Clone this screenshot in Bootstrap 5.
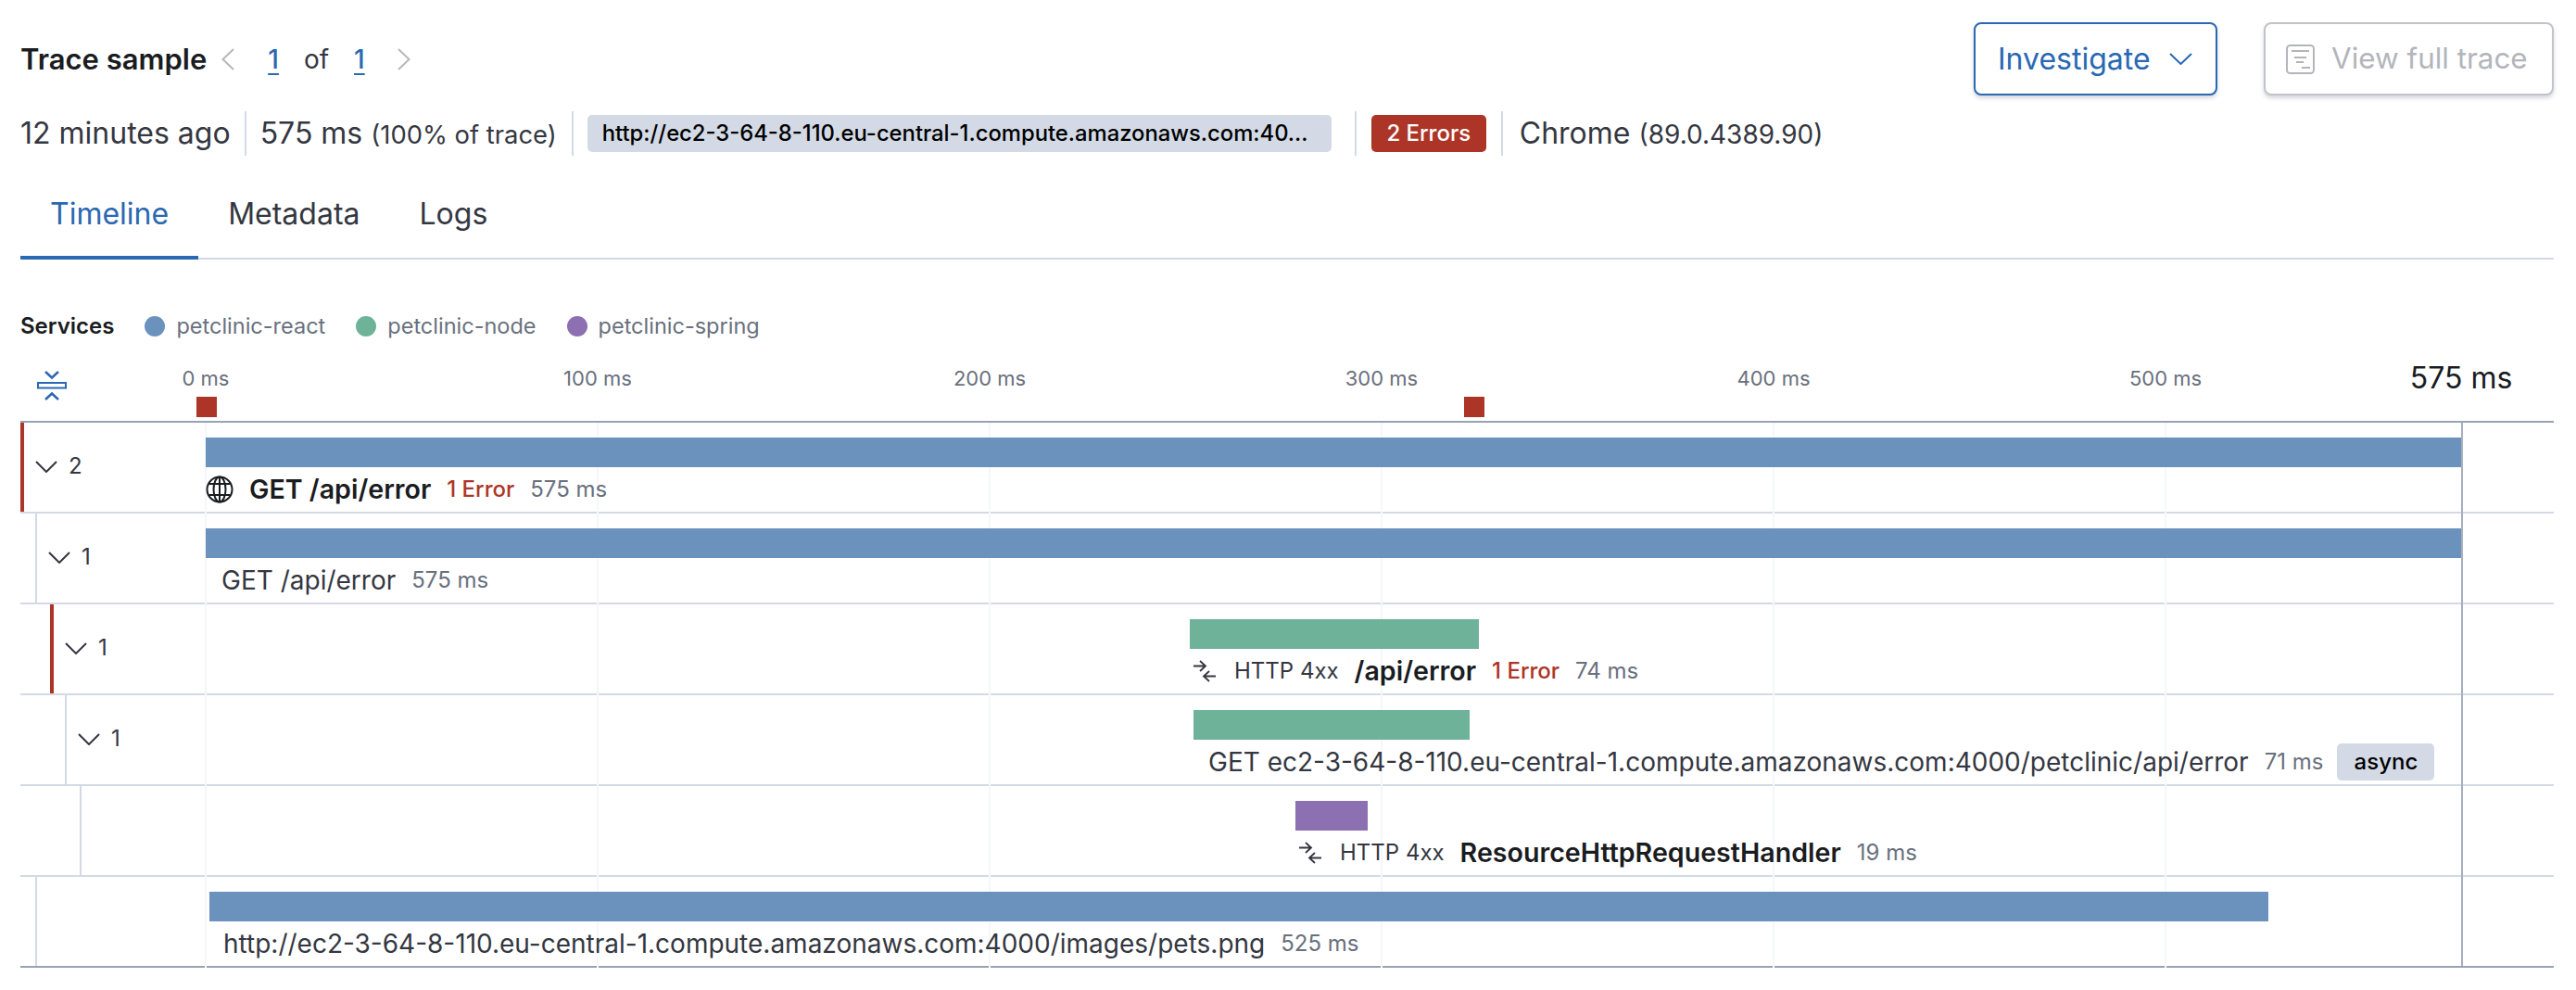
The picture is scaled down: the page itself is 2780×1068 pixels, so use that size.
<!DOCTYPE html>
<html lang="en">
<head>
<meta charset="utf-8">
<title>Trace sample</title>
<link href="https://cdn.jsdelivr.net/npm/bootstrap@5.3.0/dist/css/bootstrap.min.css" rel="stylesheet">
<style>
body{font-family:Inter,"Liberation Sans",sans-serif;color:#343741;background:#fff;overflow:hidden}
.wf-page{padding:24px 24px 0 22px}
.wf-head{height:79px}
.wf-title{font-size:31px;font-weight:600;color:#1a1c21;margin:0 16px 0 0}
.wf-pager{font-size:28px;color:#343741}
.wf-pager a{color:#2968b2;font-weight:500;text-decoration:underline;text-underline-offset:5px}
.wf-pg-first{margin-left:36px}
.wf-pg-of{margin:0 27px}
.wf-pg-next{margin-left:35px}
.wf-actions{column-gap:50px}
.wf-btn{height:79px;font-size:32px;font-weight:400;border-width:2.5px;border-radius:8px;display:flex;align-items:center;box-shadow:0 3px 4px rgba(60,80,120,.22)}
.wf-btn-primary{width:263px;padding:0 24px;gap:20px;color:#2968b2;border-color:#2968b2;background:#fff}
.wf-btn-primary:hover{color:#2968b2;background:#fff;border-color:#2968b2}
.wf-btn-off,.wf-btn-off:disabled{width:313px;font-size:31.400px;padding:0 22px;gap:18px;color:#b3b5bb;border-color:#c2c3c8;background:#fff;opacity:1;white-space:nowrap}
.wf-meta{margin-top:17px;height:48px;font-size:32px}
.wf-meta small{font-size:28px}
.wf-meta small.wf-tight{font-size:27.400px}
.wf-cell{display:flex;align-items:center;height:48px;padding-right:15px;margin-right:15px;border-right:2px solid #d3dae6}
.wf-cell-dur{padding-right:16px}
.wf-cell-url{padding-right:25px;margin-right:16px}
.wf-cell-err{padding-right:16px;margin-right:16px}
.wf-browser{margin-left:2px}
.wf-pill{height:40px;border-radius:5px;font-size:24px;font-weight:500;line-height:40px;padding:0 16px;display:block}
.wf-pill-url{width:803px;background:#d3dae6;color:#000;text-align:left;font-size:23.800px}
.wf-pill-err{background:#ad3527;color:#fff;width:124px;text-align:center;padding:0}
.wf-pill-tag{background:#d3dae6;color:#000;width:105px;padding:0;text-align:center;margin-left:-2px}
.wf-tabs{height:112px;border-bottom:2px solid #d3dae6;align-items:flex-end}
.wf-tabs .nav-link{font-size:32px;color:#343741;height:88px;padding:0 32px 7px;margin-bottom:-2px;display:flex;align-items:center;border-bottom:4px solid transparent}
.wf-tabs .nav-link.active{color:#2968b2;border-bottom-color:#2968b2}
.wf-legend{margin-top:56px;height:32px;font-size:23.500px;color:#69707d}
.wf-legend b{font-weight:600;font-size:24px;color:#1a1c21;margin-right:33px}
.wf-dot{width:22px;height:22px;border-radius:50%;margin-right:12px;flex:none}
.wf-legend-item{margin-right:33px}
.wf-blue{background:#6a92bd}.wf-green{background:#6eb29a}.wf-purple{background:#8c70b1}
.wf-ruler{margin-top:24px;height:32px;font-size:22px;color:#69707d}
.wf-ruler-icon{width:140px;padding-left:18px;margin-top:16px;flex:none}
.wf-tick{width:120px;text-align:center;flex:none;margin-right:303px;white-space:nowrap}
.wf-tick-end{font-size:32px;color:#1a1c21;margin-right:0}
.wf-marks{height:22px;margin-top:4px;margin-bottom:4px}
.wf-mark{width:22px;height:22px;background:#ad3527;flex:none}
.wf-list{position:relative;border-top:2px solid #98a2b3;border-bottom:2px solid #98a2b3}
.wf-list::before{content:"";position:absolute;top:0;bottom:-2px;left:199px;right:0;z-index:1;pointer-events:none;background:repeating-linear-gradient(to right,#f5f7fb 0,#f5f7fb 2px,transparent 2px,transparent 423px)}
.wf-list::after{content:"";position:absolute;top:0;bottom:0;left:2634px;width:2px;background:#a7aec0;z-index:1}
.wf-row{height:98px;border-bottom:2px solid #d3dae6}
.wf-row:last-child{height:96px;border-bottom:0}
.wf-tree{width:200px;flex:none;height:100%}
.wf-branch{height:100%;border-left:2px solid #d3dae6;display:flex;align-items:center;gap:12px;font-size:24px;padding-left:12px;padding-bottom:2px}
.wf-branch-err{border-left:4px solid #ad3527}
.wf-track{flex:1;min-width:0;padding-top:16px;position:relative;z-index:2}
.wf-bar{height:32px}
.wf-label{height:48px;font-size:28px;white-space:nowrap;gap:17px}
.wf-label b{font-weight:600;color:#1a1c21;font-size:28.600px}
.wf-ms{color:#69707d;font-size:24px}
.wf-err{color:#ad3527;font-size:24px;font-weight:500}
.wf-http{font-size:24px;margin-left:3px}
.wf-label svg{flex:none}
</style>
</head>
<body>
<div class="wf-page">
  <div class="wf-head d-flex align-items-center justify-content-between">
    <div class="d-flex align-items-center">
      <h2 class="wf-title">Trace sample</h2>
      <div class="wf-pager d-flex align-items-center">
        <svg width="14" height="24" viewBox="0 0 14 24" fill="none" stroke="#b5b7bd" stroke-width="2"><path d="M13 1 1.500 12 13 23"/></svg>
        <a href="#" class="wf-pg-first">1</a><span class="wf-pg-of">of</span><a href="#">1</a>
        <svg class="wf-pg-next" width="14" height="24" viewBox="0 0 14 24" fill="none" stroke="#b5b7bd" stroke-width="2"><path d="M1 1 12.500 12 1 23"/></svg>
      </div>
    </div>
    <div class="wf-actions d-flex">
      <button type="button" class="btn wf-btn wf-btn-primary">Investigate
        <svg width="25" height="13" viewBox="0 0 25 13" fill="none" stroke="#2968b2" stroke-width="2"><path d="M1 1l11.500 11L24 1"/></svg></button>
      <button type="button" class="btn wf-btn wf-btn-off" disabled>
        <svg width="31" height="32" viewBox="0 0 31 32" fill="none" stroke="#b3b5bb" stroke-width="2"><rect x="1" y="1" width="29" height="30" rx="3.500"/><path d="M6 7h19M9 14h13M11 19h8M17 25h9"/></svg>View full trace</button>
    </div>
  </div>

  <div class="wf-meta d-flex align-items-center">
    <div class="wf-cell">12 minutes ago</div>
    <div class="wf-cell wf-cell-dur"><span>575 ms&nbsp;<small class="wf-tight">(100% of trace)</small></span></div>
    <div class="wf-cell wf-cell-url"><span class="badge wf-pill wf-pill-url">http://ec2-3-64-8-110.eu-central-1.compute.amazonaws.com:40...</span></div>
    <div class="wf-cell wf-cell-err"><span class="badge wf-pill wf-pill-err">2 Errors</span></div>
    <div class="wf-browser"><span>Chrome <small>(89.0.4389.90)</small></span></div>
  </div>

  <ul class="nav wf-tabs">
    <li class="nav-item"><a class="nav-link active" href="#">Timeline</a></li>
    <li class="nav-item"><a class="nav-link" href="#">Metadata</a></li>
    <li class="nav-item"><a class="nav-link" href="#">Logs</a></li>
  </ul>

  <div class="wf-legend d-flex align-items-center">
    <b>Services</b>
    <span class="wf-dot wf-blue"></span><span class="wf-legend-item">petclinic-react</span>
    <span class="wf-dot wf-green"></span><span class="wf-legend-item">petclinic-node</span>
    <span class="wf-dot wf-purple"></span><span class="wf-legend-item">petclinic-spring</span>
  </div>

  <div class="wf-ruler d-flex align-items-center">
    <div class="wf-ruler-icon">
      <svg class="d-block" width="32" height="32" viewBox="0 0 32 32" fill="none" stroke="#2968b2" stroke-width="2.500"><path d="M9 1l7 6.500L23 1M9 31l7-6.500 7 6.500"/><rect x="1" y="13" width="30" height="5.500" stroke-width="2"/></svg>
    </div>
    <div class="wf-tick">0 ms</div><div class="wf-tick">100 ms</div><div class="wf-tick">200 ms</div><div class="wf-tick">300 ms</div><div class="wf-tick">400 ms</div>
    <div class="wf-tick" style="margin-right:199px">500 ms</div>
    <div class="wf-tick wf-tick-end">575 ms</div>
  </div>
  <div class="wf-marks d-flex">
    <div class="wf-mark" style="margin-left:190px"></div>
    <div class="wf-mark" style="margin-left:1346px"></div>
  </div>

  <div class="wf-list">
    <div class="wf-row d-flex">
      <div class="wf-tree"><div class="wf-branch wf-branch-err">
        <svg width="24" height="13" viewBox="0 0 24 13" fill="none" stroke="#343741" stroke-width="2"><path d="M1 1l11 11L23 1"/></svg><span>2</span></div></div>
      <div class="wf-track">
        <div class="wf-bar wf-blue" style="width:2434px"></div>
        <div class="wf-label d-flex align-items-center">
          <svg width="30" height="30" viewBox="0 0 30 30" fill="none" stroke="#1a1c21" stroke-width="2"><circle cx="15" cy="15" r="13.500"/><ellipse cx="15" cy="15" rx="6.500" ry="13.500"/><path d="M15 1.500v27M3.500 9h23M3.500 21h23"/></svg>
          <b>GET /api/error</b><span class="wf-err">1 Error</span><span class="wf-ms">575 ms</span>
        </div>
      </div>
    </div>
    <div class="wf-row d-flex">
      <div class="wf-tree" style="padding-left:16px"><div class="wf-branch">
        <svg width="24" height="13" viewBox="0 0 24 13" fill="none" stroke="#343741" stroke-width="2"><path d="M1 1l11 11L23 1"/></svg><span>1</span></div></div>
      <div class="wf-track">
        <div class="wf-bar wf-blue" style="width:2434px"></div>
        <div class="wf-label d-flex align-items-center" style="margin-left:17px"><span>GET /api/error</span><span class="wf-ms">575 ms</span></div>
      </div>
    </div>
    <div class="wf-row d-flex">
      <div class="wf-tree" style="padding-left:32px"><div class="wf-branch wf-branch-err">
        <svg width="24" height="13" viewBox="0 0 24 13" fill="none" stroke="#343741" stroke-width="2"><path d="M1 1l11 11L23 1"/></svg><span>1</span></div></div>
      <div class="wf-track">
        <div class="wf-bar wf-green" style="margin-left:1062px;width:312px"></div>
        <div class="wf-label d-flex align-items-center" style="margin-left:1066px">
          <svg width="24" height="24" viewBox="0 0 24 24" fill="none" stroke="#343741" stroke-width="1.800"><path d="M0 6.500h13M7 1l6 5.500-6 5.500M24 17.500H11M17 12l-6 5.500 6 5.500"/></svg>
          <span class="wf-http">HTTP 4xx</span><b>/api/error</b><span class="wf-err">1 Error</span><span class="wf-ms">74 ms</span>
        </div>
      </div>
    </div>
    <div class="wf-row d-flex">
      <div class="wf-tree" style="padding-left:48px"><div class="wf-branch">
        <svg width="24" height="13" viewBox="0 0 24 13" fill="none" stroke="#343741" stroke-width="2"><path d="M1 1l11 11L23 1"/></svg><span>1</span></div></div>
      <div class="wf-track">
        <div class="wf-bar wf-green" style="margin-left:1066px;width:298px"></div>
        <div class="wf-label d-flex align-items-center" style="margin-left:1082px"><span>GET ec2-3-64-8-110.eu-central-1.compute.amazonaws.com:4000/petclinic/api/error</span><span class="wf-ms">71 ms</span><span class="badge wf-pill wf-pill-tag">async</span></div>
      </div>
    </div>
    <div class="wf-row d-flex">
      <div class="wf-tree" style="padding-left:64px"><div class="wf-branch"></div></div>
      <div class="wf-track">
        <div class="wf-bar wf-purple" style="margin-left:1176px;width:78px"></div>
        <div class="wf-label d-flex align-items-center" style="margin-left:1180px">
          <svg width="24" height="24" viewBox="0 0 24 24" fill="none" stroke="#343741" stroke-width="1.800"><path d="M0 6.500h13M7 1l6 5.500-6 5.500M24 17.500H11M17 12l-6 5.500 6 5.500"/></svg>
          <span class="wf-http">HTTP 4xx</span><b>ResourceHttpRequestHandler</b><span class="wf-ms">19 ms</span>
        </div>
      </div>
    </div>
    <div class="wf-row d-flex">
      <div class="wf-tree" style="padding-left:16px"><div class="wf-branch"></div></div>
      <div class="wf-track">
        <div class="wf-bar wf-blue" style="margin-left:4px;width:2222px"></div>
        <div class="wf-label d-flex align-items-center" style="margin-left:19px"><span>http://ec2-3-64-8-110.eu-central-1.compute.amazonaws.com:4000/images/pets.png</span><span class="wf-ms">525 ms</span></div>
      </div>
    </div>
  </div>
</div>
<script src="https://cdn.jsdelivr.net/npm/bootstrap@5.3.0/dist/js/bootstrap.bundle.min.js"></script>
</body>
</html>
